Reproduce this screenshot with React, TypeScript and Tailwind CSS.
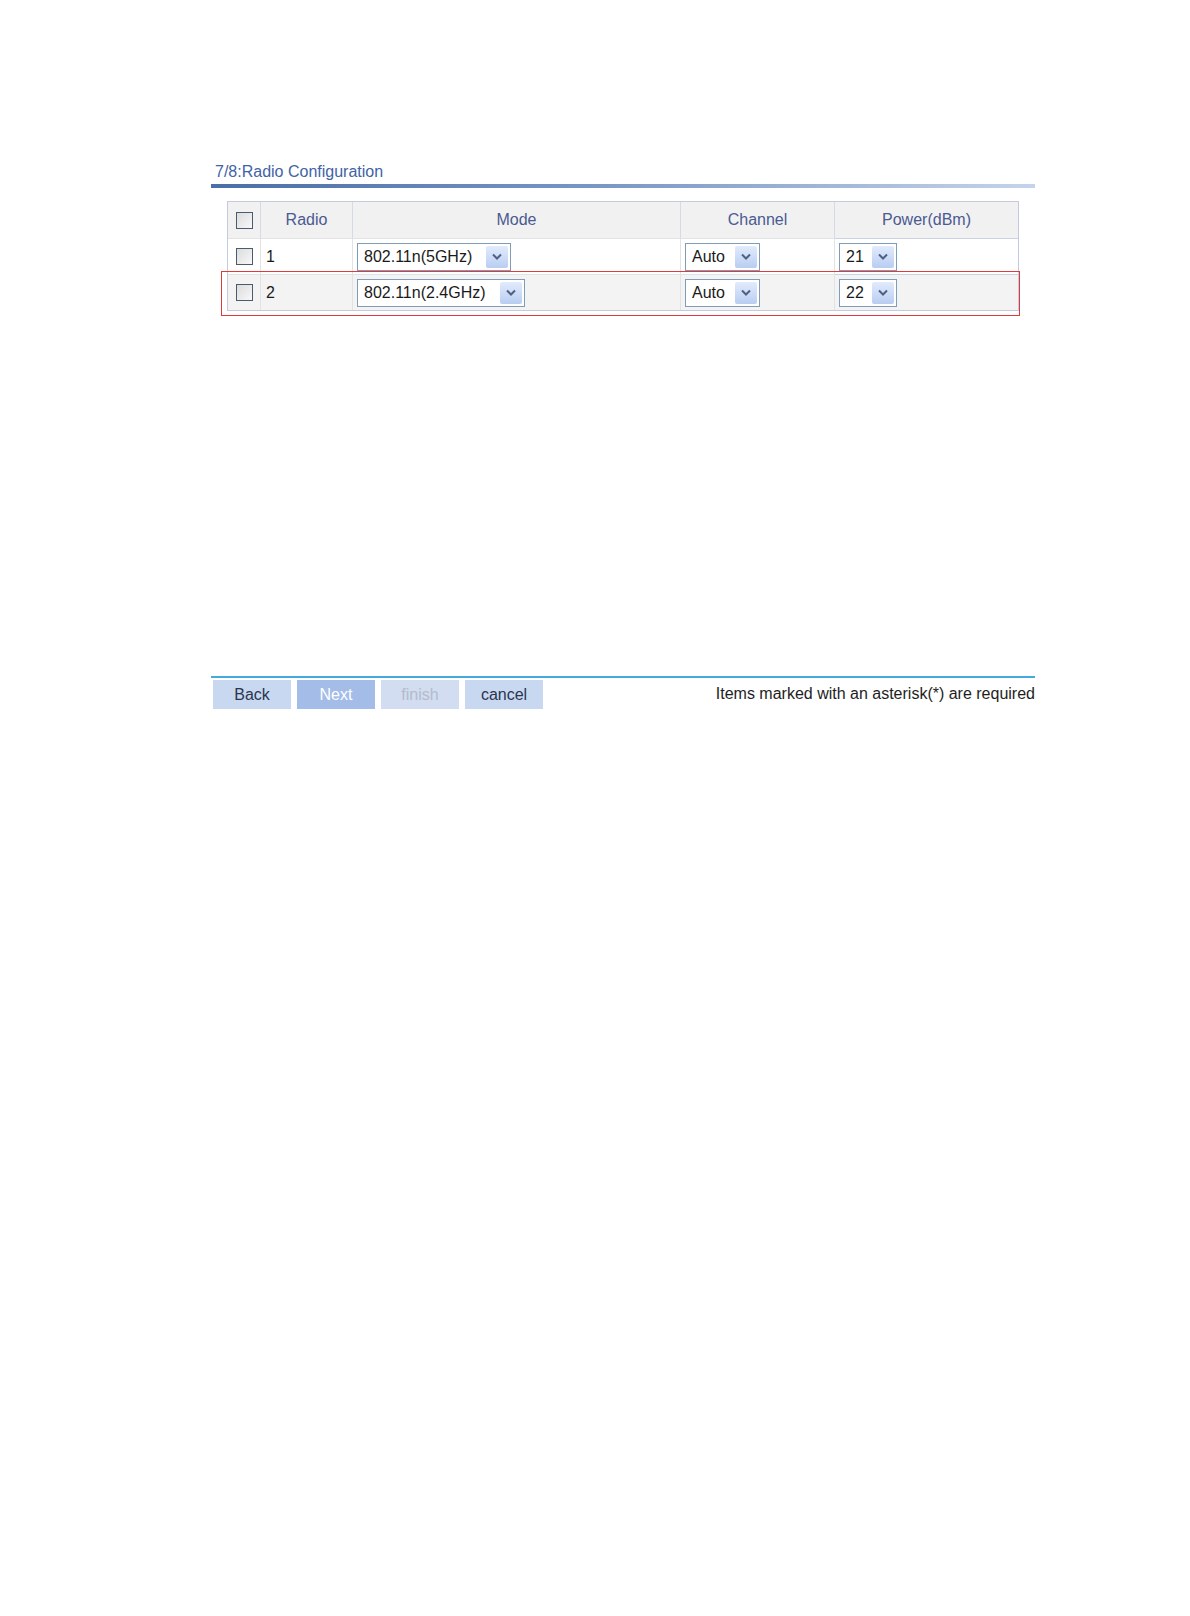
import React from "react";

const font = { fontFamily: '"Liberation Sans", Arial, sans-serif' };

const Checkbox = () => (
  <span className="inline-block h-[17px] w-[17px] border border-[#4a5a70] bg-gradient-to-br from-[#dcdcdc] to-[#f8f8f8]" />
);

const Select = ({ value, width }: { value: string; width: string }) => (
  <div
    className={`flex h-[28px] items-center justify-between border border-[#7f9db9] bg-white pl-[6px] pr-[2px] ${width}`}
  >
    <span className="text-[16px] leading-none text-[#1a1a1a]">{value}</span>
    <span className="flex h-[22px] w-[22px] items-center justify-center rounded-[2px] bg-gradient-to-b from-[#e2ebfc] to-[#b9cdf2]">
      <svg width="10" height="7" viewBox="0 0 10 7">
        <path d="M1 1.5 L5 5.5 L9 1.5" stroke="#4d6185" strokeWidth="2" fill="none" />
      </svg>
    </span>
  </div>
);

interface RowProps {
  num: string;
  mode: string;
  modeWidth: string;
  power: string;
  shaded?: boolean;
}

const Row = ({ num, mode, modeWidth, power, shaded }: RowProps) => {
  const bg = shaded ? "bg-[#f3f3f3]" : "bg-white";
  const cell = `flex items-center border-r border-[#e2e2e2] ${bg}`;
  return (
    <>
      <div className={`${cell} h-[36px] border-t border-[#c9d1e3] pl-[8px]`}>
        <Checkbox />
      </div>
      <div className={`${cell} h-[36px] border-t border-[#c9d1e3] pl-[5px] text-[16px] text-[#1a1a1a]`}>
        {num}
      </div>
      <div className={`${cell} h-[36px] border-t border-[#c9d1e3] pl-[4px]`}>
        <Select value={mode} width={modeWidth} />
      </div>
      <div className={`${cell} h-[36px] border-t border-[#c9d1e3] pl-[4px]`}>
        <Select value="Auto" width="w-[75px]" />
      </div>
      <div className={`flex h-[36px] items-center border-t border-[#c9d1e3] pl-[4px] ${bg}`}>
        <Select value={power} width="w-[58px]" />
      </div>
    </>
  );
};

const Btn = ({ label, tone }: { label: string; tone: "normal" | "active" | "disabled" }) => {
  const cls =
    tone === "active"
      ? "bg-[#a3bde8] text-white"
      : tone === "disabled"
        ? "bg-[#d2ddf1] text-[#b3bccb]"
        : "bg-[#c9d8f1] text-[#2a3550]";
  return (
    <button className={`h-[29px] w-[78px] text-[16px] leading-[29px] ${cls}`}>{label}</button>
  );
};

export default function App() {
  const head = "flex h-[36px] items-center justify-center border-r border-[#d4dae6] text-[16px] text-[#4a5a92]";
  return (
    <div className="min-h-[1616px] w-[1190px] bg-white" style={font}>
      <div className="ml-[211px] w-[824px] pt-[162px]">
        <div className="pl-[4px] text-[16px] leading-[20px] text-[#3f63a6]">7/8:Radio Configuration</div>
        <div className="mt-[2px] h-[4px] bg-gradient-to-r from-[#4a6ea8] via-[#7d9ac6] to-[#c6d4ea]" />

        <div className="relative ml-[16px] mt-[13px] w-[792px]">
          <div className="grid grid-cols-[33px_92px_328px_154px_183px] border border-[#c3cbde]">
            <div className="flex h-[36px] items-center border-r border-[#d4dae6] bg-[#f1f1f1] pl-[8px]">
              <Checkbox />
            </div>
            <div className={`${head} bg-[#f1f1f1]`}>Radio</div>
            <div className={`${head} bg-[#f1f1f1]`}>Mode</div>
            <div className={`${head} bg-[#f1f1f1]`}>Channel</div>
            <div className={`${head} border-r-0 bg-[#f1f1f1]`}>Power(dBm)</div>
            <Row num="1" mode="802.11n(5GHz)" modeWidth="w-[154px]" power="21" />
            <Row num="2" mode="802.11n(2.4GHz)" modeWidth="w-[168px]" power="22" shaded />
          </div>
          <div className="pointer-events-none absolute left-[-6px] top-[70px] h-[45px] w-[799px] border-[1.5px] border-[#e0393b]" />
        </div>

        <div className="mt-[365px] h-[2px] bg-[#44a9dc]" />
        <div className="mt-[2px] flex items-start justify-between">
          <div className="ml-[2px] flex gap-[6px]">
            <Btn label="Back" tone="normal" />
            <Btn label="Next" tone="active" />
            <Btn label="finish" tone="disabled" />
            <Btn label="cancel" tone="normal" />
          </div>
          <div className="pt-[5px] text-[16px] leading-[18px] text-[#1e1e1e]">
            Items marked with an asterisk(*) are required
          </div>
        </div>
      </div>
    </div>
  );
}
